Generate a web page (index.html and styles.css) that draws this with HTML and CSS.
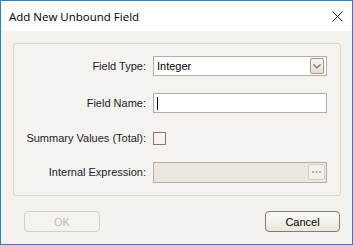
FILE: index.html
```html
<!DOCTYPE html>
<html lang="en">
<head>
  <meta charset="UTF-8">
  <title>Add New Unbound Field</title>
  <link rel="stylesheet" href="styles.css">
</head>
<body>
  <div class="window">
    <div class="titlebar">
      <span class="title">Add New Unbound Field</span>
      <svg class="close" width="11" height="11" viewBox="0 0 11 11">
        <path d="M0.5 0.5 L10.5 10.5 M10.5 0.5 L0.5 10.5" stroke="#111" stroke-width="1"/>
      </svg>
    </div>
    <div class="content">
      <div class="panel">
        <div class="row r1">
          <label class="lbl">Field Type:</label>
          <div class="combo">
            <span class="value">Integer</span>
            <span class="drop">
              <svg width="8" height="5" viewBox="0 0 8 5"><path d="M0.5 0.5 L4 4 L7.5 0.5" fill="none" stroke="#7b6d60" stroke-width="1.2"/></svg>
            </span>
          </div>
        </div>
        <div class="row r2">
          <label class="lbl">Field Name:</label>
          <div class="edit"><span class="caret"></span></div>
        </div>
        <div class="row r3">
          <label class="lbl">Summary Values (Total):</label>
          <span class="check"></span>
        </div>
        <div class="row r4">
          <label class="lbl">Internal Expression:</label>
          <div class="edit disabled">
            <span class="dots">
              <svg width="9" height="2" viewBox="0 0 9 2"><path d="M0 0h2v2H0zM3.5 0h2v2h-2zM7 0h2v2H7z" fill="#b3aca3"/></svg>
            </span>
          </div>
        </div>
      </div>
      <div class="buttons">
        <button class="btn ok" disabled>OK</button>
        <button class="btn cancel">Cancel</button>
      </div>
    </div>
  </div>
</body>
</html>
```

FILE: styles.css
```css
html, body {
  margin: 0;
  padding: 0;
}
body {
  font-family: "Liberation Sans", Arial, sans-serif;
  font-size: 11px;
  color: #1a1a2e;
}
.window {
  width: 353px;
  height: 245px;
  box-sizing: border-box;
  border: 1px solid #1883d7;
  display: flex;
  flex-direction: column;
  background: #f4f2ee;
}
.titlebar {
  height: 30px;
  background: #fff;
  display: flex;
  align-items: center;
  justify-content: space-between;
  padding: 0 9px 0 8px;
}
.title {
  font-family: "Open Sans", "Noto Sans", sans-serif;
  font-size: 11.5px;
  color: #000;
}
.close {
  margin-top: 1px;
}
.content {
  flex: 1;
  padding: 12px 0 0 12px;
}
.panel {
  width: 328px;
  height: 153px;
  box-sizing: border-box;
  border: 1px solid #dcd6cb;
  border-radius: 3px;
  background: #f5f3ef;
  padding-top: 12px;
}
.row {
  display: flex;
  align-items: center;
  height: 20px;
}
.r2 { margin-top: 17px; }
.r3 { margin-top: 15px; }
.r4 { margin-top: 14px; }
.lbl {
  width: 132px;
  text-align: right;
  margin-right: 7px;
  white-space: nowrap;
}
.combo, .edit {
  width: 174px;
  height: 20px;
  box-sizing: border-box;
  border: 1px solid #b8ada1;
  background: #fff;
  display: flex;
  align-items: center;
  position: relative;
}
.value {
  padding-left: 3px;
  color: #000;
}
.drop {
  position: absolute;
  right: 2px;
  top: 1px;
  width: 14px;
  height: 16px;
  box-sizing: border-box;
  border: 1px solid #a39383;
  border-radius: 2px;
  background: linear-gradient(#f8f6f1, #e4ded3);
  display: flex;
  align-items: center;
  justify-content: center;
}
.caret {
  width: 1px;
  height: 13px;
  background: #000;
  margin-left: 3px;
}
.check {
  width: 13px;
  height: 13px;
  box-sizing: border-box;
  border: 1px solid #8c7866;
  background: #f6f4f0;
}
.edit.disabled {
  background: #ebe8e0;
  height: 21px;
}
.dots {
  position: absolute;
  right: 1px;
  top: 1px;
  width: 17px;
  height: 16px;
  box-sizing: border-box;
  border: 1px solid #d3cdc4;
  border-radius: 2px;
  background: #f3f1ec;
  display: flex;
  align-items: center;
  justify-content: center;
}
.buttons {
  width: 328px;
  display: flex;
  justify-content: space-between;
  margin-top: 15px;
  padding: 0 1px 0 11px;
  box-sizing: border-box;
}
.btn {
  height: 21px;
  box-sizing: border-box;
  border-radius: 4px;
  font-family: "Liberation Sans", Arial, sans-serif;
  font-size: 11px;
  padding: 0;
}
.ok {
  width: 76px;
  border: 1px solid #d4d0c8;
  background: #f5f3ef;
  color: #c2bdb5;
}
.cancel {
  width: 75px;
  border: 1px solid #867b6e;
  background: linear-gradient(#fbfaf7, #ece7dd);
  color: #000;
}
```
